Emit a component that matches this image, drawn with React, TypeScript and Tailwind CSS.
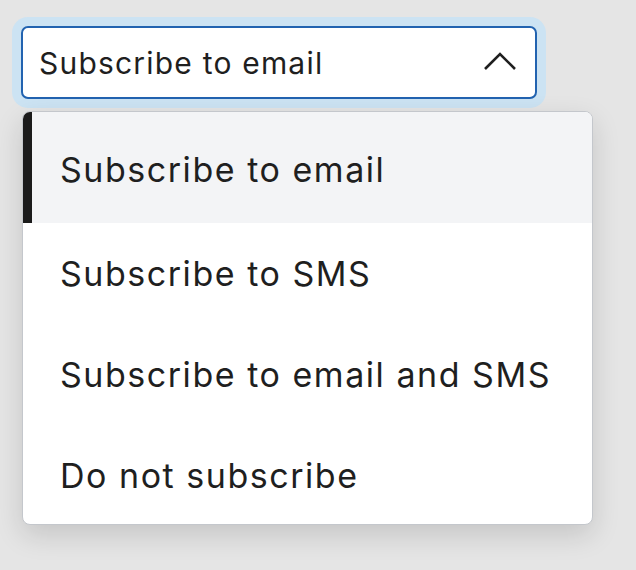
import React from 'react';

const options = [
  "Subscribe to email",
  "Subscribe to SMS",
  "Subscribe to email and SMS",
  "Do not subscribe",
];

function ChevronUp() {
  return (
    <svg width="34" height="20" viewBox="0 0 34 20" fill="none">
      <path d="M2 18 L17 3 L32 18" stroke="#1f1f1f" strokeWidth="2.6" />
    </svg>
  );
}

export default function App() {
  const selected = 0;
  return (
    <div className="min-h-[570px] w-full bg-[#e5e5e5] font-['Inter',sans-serif] text-[#1f1f1f]">
      <div className="pl-[21px] pt-[26px]">
        {/* select trigger */}
        <div className="flex h-[73px] w-[516px] items-center justify-between rounded-[7px] border-2 border-[#2263b0] bg-white pl-[16px] pr-[18px] shadow-[0_0_0_9px_#cce3f3]">
          <span className="text-[30px] leading-none tracking-[0.04em]">{options[selected]}</span>
          <span className="-mt-[3px]">
            <ChevronUp />
          </span>
        </div>

        {/* options list */}
        <div className="ml-[1px] mt-[12px] w-[571px] overflow-hidden rounded-[8px] border border-[#c4c7cc] bg-white shadow-[0_10px_28px_rgba(0,0,0,0.14)]">
          {options.map((opt, i) => (
            <div
              key={opt}
              className={
                i === 0
                  ? "flex h-[111px] items-center border-l-[9px] border-[#1b1b1b] bg-[#f3f4f6] pl-[28px] pt-[4px] text-[34px] tracking-[0.045em]"
                  : i === options.length - 1
                  ? "flex h-[99px] items-center pl-[37px] pt-[1px] text-[34px] tracking-[0.045em]"
                  : "flex h-[101px] items-center pl-[37px] text-[34px] tracking-[0.045em]"
              }
            >
              {opt}
            </div>
          ))}
        </div>
      </div>
    </div>
  );
}
